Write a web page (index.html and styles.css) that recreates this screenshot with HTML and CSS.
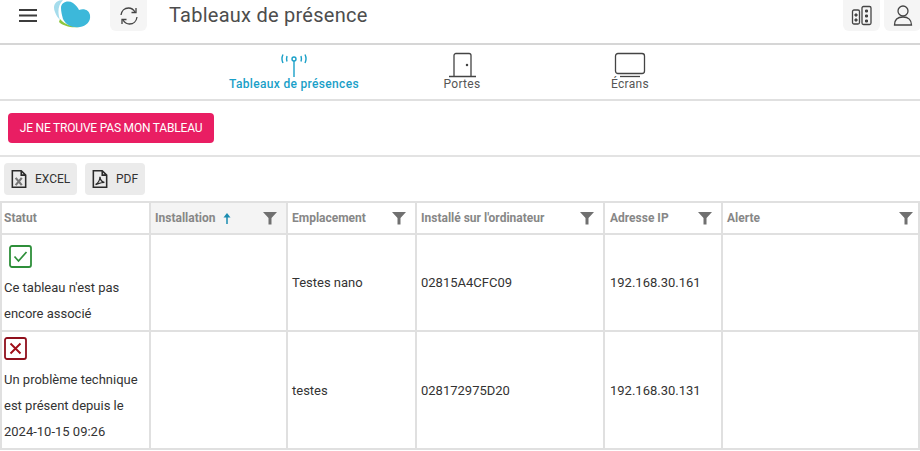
FILE: index.html
```html
<!DOCTYPE html>
<html lang="fr">
<head>
<meta charset="utf-8">
<title>Tableaux de présence</title>
<link rel="stylesheet" href="styles.css">
</head>
<body>
<header class="topbar">
  <button class="menu" aria-label="Menu"><svg width="20" height="14" viewBox="0 0 20 14"><path d="M1 2h18M1 7.500h18M1 13h18" stroke="#3c3c3c" stroke-width="2" fill="none"/></svg></button>
  <svg class="logo" width="38" height="30" viewBox="0 0 38 30">
    <path d="M6 22c4 4 12 6 20 5-7-1-14-2-19-8z" fill="#8cc63f"/>
    <path d="M10 0C3 0-1 5 2 12c1 3 3 6 5 8-2-6-3-14 3-20z" fill="#a5dcec"/>
    <path d="M8 8C8 2 15 0 20 3c3 2 5 5 6 7 5-2 10 0 11 5 1 7-4 11-10 12-8 1-14-2-17-8-1-4-2-7-2-11z" fill="#3cb8da"/>
  </svg>
  <button class="square refresh" aria-label="Actualiser"><svg width="20" height="20" viewBox="0 0 20 20" fill="none" stroke="#444" stroke-width="1.300"><path d="M2 9c.5-4 3.500-7 7.500-7 3 0 5 1.500 6.500 4M18 11c-.5 4-3.500 7-7.500 7-3 0-5-1.500-6.500-4"/><path d="M17 2v4.500h-4.500M3 18v-4.500h4.500"/></svg></button>
  <h1 class="title">Tableaux de présence</h1>
  <div class="top-right">
    <button class="square" aria-label="Bâtiments"><svg width="22" height="22" viewBox="0 0 22 22" fill="none" stroke="#444" stroke-width="1.300"><rect x="1.500" y="5" width="7" height="14" rx="1.500"/><rect x="11" y="1.500" width="9" height="18" rx="1.500"/><path d="M4 9h2v2H4zM4 14h2v2H4zM14.500 5h2v2h-2zM14.500 10h2v2h-2zM14.500 15h2v2h-2z" fill="#444" stroke-width="1"/></svg></button>
    <button class="square" aria-label="Profil"><svg width="22" height="24" viewBox="0 0 22 24" fill="none" stroke="#444" stroke-width="1.300"><circle cx="11" cy="7" r="5"/><path d="M2.500 21c0-5 3-8 8.500-8s8.500 3 8.500 8z"/></svg></button>
  </div>
</header>

<nav class="tabs">
  <a class="tab active">
    <svg width="28" height="26" viewBox="0 0 28 26" fill="none" stroke="#1aa0c8" stroke-width="1.400"><circle cx="14" cy="7" r="2"/><path d="M14 9V25M3 2.500c-1.300 2.700-1.300 5.800 0 8.500M25 2.500c1.300 2.700 1.300 5.800 0 8.500M7 4c-.6 2-.6 3.500 0 5.500M21 4c.6 2 .6 3.500 0 5.500"/></svg>
    <span>Tableaux de présences</span>
  </a>
  <a class="tab">
    <svg width="28" height="26" viewBox="0 0 28 26" fill="none" stroke="#444" stroke-width="1.300"><path d="M6 24.500V3.500a2 2 0 0 1 2-2h13a2 2 0 0 1 2 2v21M1 24.500h27"/><circle cx="19" cy="13" r=".6" fill="#444"/></svg>
    <span>Portes</span>
  </a>
  <a class="tab">
    <svg width="32" height="26" viewBox="0 0 32 26" fill="none" stroke="#444" stroke-width="1.300"><rect x="1.500" y="1.500" width="29" height="20" rx="2.500"/><path d="M6 24.500h20"/></svg>
    <span>Écrans</span>
  </a>
</nav>

<section class="notice">
  <button class="cta">JE NE TROUVE PAS MON TABLEAU</button>
</section>

<section class="exports">
  <button class="export">
    <svg width="18" height="20" viewBox="0 0 16 18" fill="none" stroke="#2b2b2b" stroke-width="1.400"><path d="M2 1.500h8l4 4v11H2zM10 1.500v4h4"/><path d="M5 8l5.500 6.500M10.500 8L5 14.500" stroke="#777" stroke-width="2"/></svg>
    EXCEL
  </button>
  <button class="export">
    <svg width="18" height="20" viewBox="0 0 16 18" fill="none" stroke="#2b2b2b" stroke-width="1.400"><path d="M2 1.500h8l4 4v11H2zM10 1.500v4h4"/><path d="M4 14c2-1 4-4 4-7 0 3 2 5 4 5-3 0-5 1-8 2z" stroke-width="1.200"/></svg>
    PDF
  </button>
</section>

<table class="grid">
  <colgroup>
    <col class="c1"><col class="c2"><col class="c3"><col class="c4"><col class="c5"><col class="c6">
  </colgroup>
  <thead>
    <tr>
      <th class="first"><div class="th-in">Statut</div></th>
      <th class="sorted"><div class="th-in">Installation <svg class="arrow" width="10" height="13" viewBox="0 0 10 13"><path d="M5 12V3" stroke="#1a8cb0" stroke-width="1.500"/><path d="M1.500 5.500L5 1l3.500 4.500z" fill="#1a8cb0"/></svg><svg class="filter" width="14" height="14" viewBox="0 0 14 14"><path d="M0 1h14L8.500 7v6.500h-3V7z" fill="#707070"/></svg></div></th>
      <th><div class="th-in">Emplacement<svg class="filter" width="14" height="14" viewBox="0 0 14 14"><path d="M0 1h14L8.500 7v6.500h-3V7z" fill="#707070"/></svg></div></th>
      <th><div class="th-in">Installé sur l'ordinateur<svg class="filter" width="14" height="14" viewBox="0 0 14 14"><path d="M0 1h14L8.500 7v6.500h-3V7z" fill="#707070"/></svg></div></th>
      <th class="ip"><div class="th-in">Adresse IP<svg class="filter" width="14" height="14" viewBox="0 0 14 14"><path d="M0 1h14L8.500 7v6.500h-3V7z" fill="#707070"/></svg></div></th>
      <th class="last"><div class="th-in">Alerte<svg class="filter" width="14" height="14" viewBox="0 0 14 14"><path d="M0 1h14L8.500 7v6.500h-3V7z" fill="#707070"/></svg></div></th>
    </tr>
  </thead>
  <tbody>
    <tr class="r1">
      <td class="status">
        <svg class="ok" width="23" height="23" viewBox="0 0 23 23" fill="none"><rect x="1" y="1" width="21" height="21" rx="2" stroke="#2e8f3a" stroke-width="1.800"/><path d="M5.500 11.500l4 4.500 8-9" stroke="#2e8f3a" stroke-width="1.700"/></svg>
        <p>Ce tableau n'est pas<br>encore associé</p>
      </td>
      <td></td>
      <td>Testes nano</td>
      <td>02815A4CFC09</td>
      <td class="ip">192.168.30.161</td>
      <td></td>
    </tr>
    <tr class="r2">
      <td class="status">
        <svg class="bad" width="23" height="23" viewBox="0 0 23 23" fill="none"><rect x="1" y="1" width="21" height="21" rx="2" stroke="#8f0f1c" stroke-width="1.800"/><path d="M6.500 6.500l10 10M16.500 6.500l-10 10" stroke="#a00d18" stroke-width="1.900"/></svg>
        <p>Un problème technique<br>est présent depuis le<br>2024-10-15 09:26</p>
      </td>
      <td></td>
      <td>testes</td>
      <td>028172975D20</td>
      <td class="ip">192.168.30.131</td>
      <td></td>
    </tr>
  </tbody>
</table>
</body>
</html>
```
FILE: styles.css
```css
* { box-sizing: border-box; }
html, body { margin: 0; padding: 0; }
body {
  width: 920px;
  height: 451px;
  overflow: hidden;
  background: #fff;
  font-family: Roboto, "Liberation Sans", sans-serif;
  color: #333;
}
button { font-family: inherit; border: 0; padding: 0; cursor: pointer; }

.topbar {
  height: 45px;
  display: flex;
  align-items: flex-start;
  border-bottom: 2px solid #d6d6d6;
}
.menu {
  width: 20px; height: 14px;
  margin: 8px 0 0 18px;
  background: none;
  display: flex;
}
.logo { margin: 0 0 0 15px; display: block; }
.square {
  width: 37px; height: 31px;
  background: #f5f5f5;
  border-radius: 0 0 6px 6px;
  display: flex;
  align-items: center;
  justify-content: center;
}
.refresh { margin-left: 19px; }
.title {
  margin: 0 0 0 22px;
  font-size: 20px;
  font-weight: 400;
  line-height: 30px;
  letter-spacing: .25px;
  color: #4d4d4d;
}
.top-right { margin-left: auto; display: flex; gap: 4px; margin-right: -1px; }

.tabs {
  height: 56px;
  display: flex;
  align-items: flex-start;
  gap: 32px;
  border-bottom: 2px solid #e0e0e0;
  padding-left: 226px;
}
.tab {
  width: 136px;
  display: flex;
  flex-direction: column;
  align-items: center;
  font-size: 12px;
  line-height: 14px;
  letter-spacing: .3px;
  color: #555;
  padding-top: 7px;
}
.tab svg { display: block; margin-bottom: -1px; }
.tab.active { color: #1aa0c8; font-weight: 500; letter-spacing: .33px; white-space: nowrap; }

.notice {
  height: 56px;
  padding: 12px 0 0 8px;
  border-bottom: 2px solid #e3e3e3;
}
.cta {
  width: 206px;
  height: 30px;
  background: #e91e63;
  color: #fff;
  font-size: 12px;
  border-radius: 4px;
  letter-spacing: -.2px;
}

.exports {
  height: 44px;
  padding: 6px 0 0 4px;
  display: flex;
  gap: 8px;
  align-items: flex-start;
}
.export {
  height: 32px;
  background: #ebebeb;
  border-radius: 4px;
  display: flex;
  align-items: center;
  gap: 7px;
  font-size: 12px;
  color: #333;
  padding: 0 0 0 6px;
}
.export:first-child { width: 73px; }
.export:last-child { width: 60px; }

.grid {
  width: 920px;
  table-layout: fixed;
  border-collapse: collapse;
  border: 2px solid #e0e0e0;
  font-size: 13px;
  color: #333;
}
.c1 { width: 149px; }
.c2 { width: 137px; }
.c3 { width: 129px; }
.c4 { width: 188px; }
.c5 { width: 118px; }
th, td { border: 2px solid #e0e0e0; padding: 0; text-align: left; }
th {
  height: 32px;
  font-size: 12px;
  font-weight: 700;
  color: #878787;
}
.th-in {
  display: flex;
  align-items: center;
  padding: 0 9px 0 4px;
}
.first .th-in { padding-left: 2px; }
.last .th-in { padding-right: 5px; }
th.ip .th-in { padding-left: 5px; }
.sorted { background: #f4f4f4; }
.arrow { margin-left: 7px; }
.filter { margin-left: auto; }
td { padding-left: 4px; }
td.ip { padding-left: 5px; }
tbody td { vertical-align: middle; }
.r1 { height: 97px; }
.r2 { height: 118px; }
td.status { vertical-align: top; padding-left: 0; }
.status svg { display: block; }
.status .ok { margin: 10px 0 0 7px; }
.status .bad { margin: 5px 0 0 2px; }
.status p { margin: 0; line-height: 26px; padding: 0 0 0 2px; }
.r1 .status p { margin-top: 7px; }
.r2 .status p { margin-top: 7px; }
```
